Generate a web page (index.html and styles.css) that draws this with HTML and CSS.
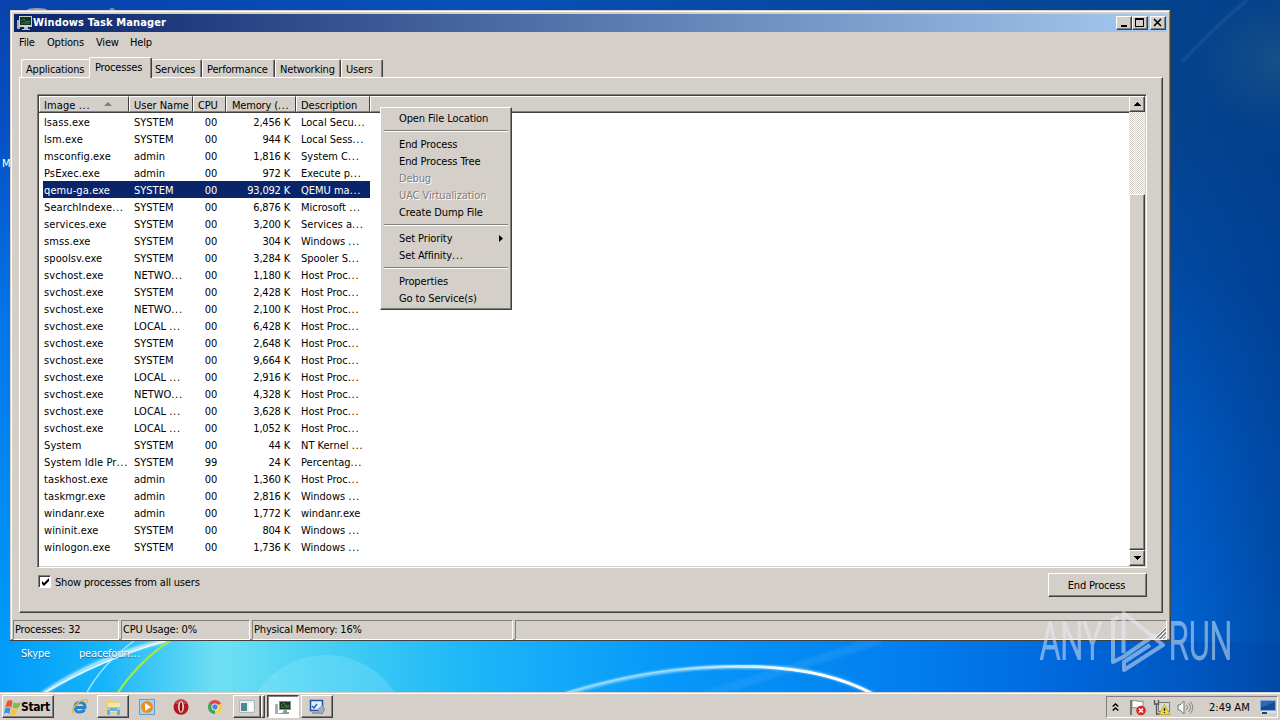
FILE: index.html
```html
<!DOCTYPE html>
<html lang="en">
<head>
<meta charset="utf-8">
<title>Windows Task Manager</title>
<link rel="stylesheet" href="styles.css">
</head>
<body>
<div class="desktop">
  <svg class="wallpaper" width="1280" height="720" viewBox="0 0 1280 720">
    <defs>
      <linearGradient id="low" x1="0" x2="1" y1="0" y2="0">
        <stop offset="0" stop-color="#009bfb"/><stop offset=".08" stop-color="#16b4fa"/><stop offset=".17" stop-color="#6fe0f2"/>
        <stop offset=".24" stop-color="#4bd2f3"/><stop offset=".36" stop-color="#1fb8f8"/><stop offset=".52" stop-color="#0798fa"/>
        <stop offset=".7" stop-color="#0280ef"/><stop offset=".83" stop-color="#0068dc"/><stop offset=".93" stop-color="#0057c2"/><stop offset="1" stop-color="#0049a6"/>
      </linearGradient>
      <linearGradient id="left" x1="0" x2="0" y1="0" y2="1">
        <stop offset="0" stop-color="#0843ad"/><stop offset=".2" stop-color="#0650c4"/><stop offset=".5" stop-color="#0276e8"/><stop offset="1" stop-color="#009bfb"/>
      </linearGradient>
      <linearGradient id="top" x1="0" x2="1" y1="0" y2="0">
        <stop offset="0" stop-color="#0842ad"/><stop offset=".35" stop-color="#0750b8"/><stop offset=".7" stop-color="#06489f"/><stop offset=".91" stop-color="#04448f"/><stop offset="1" stop-color="#0b4684"/>
      </linearGradient>
      <linearGradient id="right" gradientUnits="userSpaceOnUse" x1="1168" x2="1300" y1="600" y2="150">
        <stop offset="0" stop-color="#0064d4"/><stop offset=".35" stop-color="#0059c2"/><stop offset=".7" stop-color="#0049a2"/><stop offset="1" stop-color="#04438c"/>
      </linearGradient>
      <linearGradient id="shade" x1="0" x2="1" y1="0" y2="0">
        <stop offset="0" stop-color="#003c8c" stop-opacity="0"/><stop offset="1" stop-color="#003c8c" stop-opacity=".6"/>
      </linearGradient>
      <linearGradient id="arc" x1="0" x2="1" y1="0" y2="0"><stop offset="0" stop-color="#fff" stop-opacity="0"/><stop offset=".6" stop-color="#fff"/></linearGradient>
      <radialGradient id="haze"><stop offset="0" stop-color="#174f88"/><stop offset="1" stop-color="#174f88" stop-opacity="0"/></radialGradient>
      <filter id="soft"><feGaussianBlur stdDeviation="1.1"/></filter>
    </defs>
    <rect width="1280" height="720" fill="url(#low)"/>
    <rect width="14" height="642" fill="url(#left)"/>
    <rect width="1280" height="14" fill="url(#top)"/>
    <rect x="1168" width="112" height="642" fill="url(#right)"/>
    <rect x="1168" width="112" height="642" fill="url(#shade)"/>
    <ellipse cx="1280" cy="60" rx="85" ry="75" fill="url(#haze)"/>
    <path d="M1182 62Q1215 26 1252-4" stroke="#477bb5" stroke-opacity=".4" stroke-width="2" fill="none" filter="url(#soft)"/>
    <circle cx="326" cy="737" r="82" fill="#b8f4ff" opacity=".2"/>
    <g fill="none">
      <path d="M690 700Q790 668 880 640" stroke="#4ab4ff" stroke-opacity=".2" stroke-width="9" filter="url(#soft)"/>
      <path d="M42 694Q100 655 168 640" stroke="#fff" stroke-opacity=".65" stroke-width="4" filter="url(#soft)"/>
      <path d="M44 693Q100 660 165 641" stroke="#e5fbff" stroke-width="1.500"/>
      <path d="M86 694Q102 664 134 641" stroke="#c4f4ff" stroke-opacity=".8" stroke-width="1.500"/>
      <path d="M117 694Q139 661 171 640" stroke="#9ee850" stroke-width="2.200"/>
      <path d="M565 694Q660 665 745 667Q820 665 875 695" stroke="#8cd7ff" stroke-width="3.500" filter="url(#soft)"/>
      <path d="M565 693Q665 663 745 667" stroke="#b7ecff" stroke-opacity=".7" stroke-width="1"/>
      <path d="M670 671Q800 655 873 694" stroke="url(#arc)" stroke-width="2.800"/>
    </g>
    <ellipse cx="37" cy="10" rx="10" ry="2" fill="#9aa0a8"/><circle cx="112" cy="11" r="3" fill="#8b8b7e"/>
  </svg>
  <span class="shortcut shortcut-m">M</span>
  <span class="shortcut shortcut-skype">Skype</span>
  <span class="shortcut shortcut-peace">peacefoun<b>...</b></span>

  <main class="window">
    <header class="titlebar">
      <svg class="app-icon" width="16" height="16" viewBox="0 0 16 16"><path d="M1 5h3v9H1z" fill="#a8afb0"/><path d="M3 1h13v11H3z" fill="#c9cfc9"/><path d="M4 2h11v8H4z" fill="#163423"/><path d="M5 6l3-2 2 3 4-1M5 8h9" stroke="#2f7d3a" fill="none"/><path d="M8 12h4v2h2v1H6v-1h2z" fill="#b8c0c2"/></svg>
      <h1>Windows Task Manager</h1>
      <div class="caption">
        <button class="raised cap"><svg width="12" height="10"><path d="M3 7h6v2H3z"/></svg></button>
        <button class="raised cap"><svg width="12" height="10"><path d="M1 0h9v9H1zM2 2v6h7V2z" fill-rule="evenodd"/></svg></button>
        <button class="raised cap cap-close"><svg width="12" height="10"><path d="M2 1l7 7M9 1L2 8" stroke="#000" stroke-width="1.600"/></svg></button>
      </div>
    </header>
    <nav class="menubar"><span>File</span><span>Options</span><span>View</span><span>Help</span></nav>
    <div class="tabs">
      <span class="tab t-app">Applications</span><span class="tab t-proc active">Processes</span><span class="tab t-serv">Services</span><span class="tab t-perf">Performance</span><span class="tab t-net">Networking</span><span class="tab t-users">Users</span>
    </div>
    <section class="page">
      <div class="list">
        <div class="table">
          <div class="row head"><span>Image <b>...</b><i class="sort"></i></span><span>User Name</span><span>CPU</span><span>Memory (<b>...</b></span><span>Description</span><span></span></div>
          <div class="row"><span>lsass.exe</span><span>SYSTEM</span><span>00</span><span>2,456 K</span><span>Local Secu<b>...</b></span></div>
          <div class="row"><span>lsm.exe</span><span>SYSTEM</span><span>00</span><span>944 K</span><span>Local Sess<b>...</b></span></div>
          <div class="row"><span>msconfig.exe</span><span>admin</span><span>00</span><span>1,816 K</span><span>System C<b>...</b></span></div>
          <div class="row"><span>PsExec.exe</span><span>admin</span><span>00</span><span>972 K</span><span>Execute p<b>...</b></span></div>
          <div class="row selected"><span>qemu-ga.exe</span><span>SYSTEM</span><span>00</span><span>93,092 K</span><span>QEMU ma<b>...</b></span></div>
          <div class="row"><span>SearchIndexe<b>...</b></span><span>SYSTEM</span><span>00</span><span>6,876 K</span><span>Microsoft <b>...</b></span></div>
          <div class="row"><span>services.exe</span><span>SYSTEM</span><span>00</span><span>3,200 K</span><span>Services a<b>...</b></span></div>
          <div class="row"><span>smss.exe</span><span>SYSTEM</span><span>00</span><span>304 K</span><span>Windows <b>...</b></span></div>
          <div class="row"><span>spoolsv.exe</span><span>SYSTEM</span><span>00</span><span>3,284 K</span><span>Spooler S<b>...</b></span></div>
          <div class="row"><span>svchost.exe</span><span>NETWO<b>...</b></span><span>00</span><span>1,180 K</span><span>Host Proc<b>...</b></span></div>
          <div class="row"><span>svchost.exe</span><span>SYSTEM</span><span>00</span><span>2,428 K</span><span>Host Proc<b>...</b></span></div>
          <div class="row"><span>svchost.exe</span><span>NETWO<b>...</b></span><span>00</span><span>2,100 K</span><span>Host Proc<b>...</b></span></div>
          <div class="row"><span>svchost.exe</span><span>LOCAL <b>...</b></span><span>00</span><span>6,428 K</span><span>Host Proc<b>...</b></span></div>
          <div class="row"><span>svchost.exe</span><span>SYSTEM</span><span>00</span><span>2,648 K</span><span>Host Proc<b>...</b></span></div>
          <div class="row"><span>svchost.exe</span><span>SYSTEM</span><span>00</span><span>9,664 K</span><span>Host Proc<b>...</b></span></div>
          <div class="row"><span>svchost.exe</span><span>LOCAL <b>...</b></span><span>00</span><span>2,916 K</span><span>Host Proc<b>...</b></span></div>
          <div class="row"><span>svchost.exe</span><span>NETWO<b>...</b></span><span>00</span><span>4,328 K</span><span>Host Proc<b>...</b></span></div>
          <div class="row"><span>svchost.exe</span><span>LOCAL <b>...</b></span><span>00</span><span>3,628 K</span><span>Host Proc<b>...</b></span></div>
          <div class="row"><span>svchost.exe</span><span>LOCAL <b>...</b></span><span>00</span><span>1,052 K</span><span>Host Proc<b>...</b></span></div>
          <div class="row"><span>System</span><span>SYSTEM</span><span>00</span><span>44 K</span><span>NT Kernel <b>...</b></span></div>
          <div class="row"><span>System Idle Pr<b>...</b></span><span>SYSTEM</span><span>99</span><span>24 K</span><span>Percentag<b>...</b></span></div>
          <div class="row"><span>taskhost.exe</span><span>admin</span><span>00</span><span>1,360 K</span><span>Host Proc<b>...</b></span></div>
          <div class="row"><span>taskmgr.exe</span><span>admin</span><span>00</span><span>2,816 K</span><span>Windows <b>...</b></span></div>
          <div class="row"><span>windanr.exe</span><span>admin</span><span>00</span><span>1,772 K</span><span>windanr.exe</span></div>
          <div class="row"><span>wininit.exe</span><span>SYSTEM</span><span>00</span><span>804 K</span><span>Windows <b>...</b></span></div>
          <div class="row"><span>winlogon.exe</span><span>SYSTEM</span><span>00</span><span>1,736 K</span><span>Windows <b>...</b></span></div>
        </div>
        <div class="scrollbar">
          <div class="raised arrow"><svg width="7" height="4"><path d="M3 0h1v1h1v1h1v1h1v1H0V3h1V2h1V1h1z"/></svg></div>
          <div class="track"></div>
          <div class="raised thumb"></div>
          <div class="raised arrow"><svg width="7" height="4"><path d="M0 0h7v1H6v1H5v1H4v1H3V3H2V2H1V1H0z"/></svg></div>
        </div>
      </div>
      <div class="actions">
        <label class="check"><i class="box"><svg width="9" height="9"><path d="M1 3l2 2 5-5v3L3 8 1 6z"/></svg></i>Show processes from all users</label>
        <button class="raised end">End Process</button>
      </div>
    </section>
    <footer class="status"><span>Processes: 32</span><span>CPU Usage: 0%</span><span>Physical Memory: 16%</span><span></span>
      <svg class="grip" width="13" height="13"><path d="M1 13L13 1M5 13l8-8M9 13l4-4" stroke="#fff"/><path d="M2 13L13 2M3 13L13 3M6 13l7-7M7 13l6-6M10 13l3-3" stroke="#808080"/></svg>
    </footer>
  </main>

  <div class="context raised">
    <span>Open File Location</span><hr>
    <span>End Process</span><span>End Process Tree</span><span class="off">Debug</span><span class="off">UAC Virtualization</span><span>Create Dump File</span><hr>
    <span class="sub">Set Priority<svg width="4" height="7"><path d="M0 0l4 3.500-4 3.500z"/></svg></span><span>Set Affinity<b>...</b></span><hr>
    <span>Properties</span><span>Go to Service(s)</span>
  </div>

  <footer class="taskbar">
    <button class="raised start"><svg width="17" height="17" viewBox="0 0 16 16"><path d="M3 2q3-2 5 0L7 8Q4 6 1 8z" fill="#e8582c"/><path d="M9 3q3 2 7 0l-2 5q-3 2-6 0z" fill="#84bd43"/><path d="M1 9q3-2 5 0l-1 5q-3-2-5 0z" fill="#3c8de0"/><path d="M7 9q3 2 6 0l-2 5q-2 2-5 0z" fill="#f9c531"/></svg>Start</button>
    <span class="quick ie"><svg width="18" height="18" viewBox="0 0 18 18"><path d="M4 9.500h10Q14 4.500 9 4.500T4 9.500t5 4.500q3 0 4.500-2.500" fill="none" stroke="#2684cf" stroke-width="2.800"/><path d="M2 15C-1 12 8 2 14 1.500q4-.3 1.500 4" fill="none" stroke="#e9b73d" stroke-width="1.400"/></svg></span>
    <span class="raised task"><svg width="18" height="18" viewBox="0 0 18 18"><path d="M2 4l2-2h4l1 2h6v12H2z" fill="#ecd078"/><path d="M4 5h12v9H4z" fill="#f8e7a4"/><path d="M3 9h13v3H3z" fill="#99cdec"/><path d="M3 17v-5h3v-2h7v2h3v5h-3v-4H6v4z" fill="#66b2dc"/></svg></span>
    <span class="quick media"><svg width="18" height="18" viewBox="0 0 18 18"><path d="M1.500 1.500h15v15h-15z" fill="#a7d4f2" stroke="#5c9fce"/><circle cx="9" cy="9" r="6" fill="#f08a1e"/><path d="M7 5l6 4-6 4z" fill="#fff"/></svg></span>
    <span class="quick opera"><svg width="18" height="18" viewBox="0 0 18 18"><ellipse cx="9" cy="9" rx="7.500" ry="7.800" fill="#b71620"/><path d="M3 6q1-4 6-4.500 5 .5 6 4.500z" fill="#e16c6c" opacity=".5"/><ellipse cx="9" cy="9" rx="2.900" ry="5.800" fill="#f5eeee"/><ellipse cx="9" cy="9" rx="1.400" ry="4.800" fill="#8e1018"/></svg></span>
    <span class="quick chrome"><svg width="16" height="16" viewBox="0 0 16 16"><path d="M8 8L1.900 4.500A7 7 0 0 1 14.100 4.500z" fill="#dd4b3e"/><path d="M8 8l6.100-3.500A7 7 0 0 1 8 15z" fill="#f8cf40"/><path d="M8 8v7A7 7 0 0 1 1.900 4.500z" fill="#3ca55c"/><circle cx="8" cy="8" r="3.500" fill="#fff"/><circle cx="8" cy="8" r="2.700" fill="#4584ec"/></svg></span>
    <span class="raised task stack"><svg width="16" height="14" viewBox="0 0 16 14"><path d="M.5.500h15v12H.5z" fill="#e9edef" stroke="#aeb8bd"/><path d="M2 3h6v8H2z" fill="#53868d"/><path d="M10 3h4v8h-4z" fill="#fff"/></svg></span><i class="raised sliver"></i>
    <span class="task pressed"><svg width="18" height="16" viewBox="0 0 18 16"><path d="M1 5h3v10H1z" fill="#a5b2a6"/><path d="M5 2h12v9H5z" fill="#80948a"/><path d="M6 3h10v7H6z" fill="#173724"/><path d="M7 6l3-2 2 3 3-1M7 8h8" stroke="#3d8b48" fill="none"/><path d="M4 14h4l2-3h3v2h2v2H5z" fill="#8d9d96"/></svg></span>
    <span class="raised task last"><svg width="18" height="18" viewBox="0 0 18 18"><path d="M2.500 2.500h12v10h-12z" fill="#e4effc" stroke="#234f9c" stroke-width="1.500"/><path d="M4 8l2 2 3-4" stroke="#2b63be" stroke-width="1.500" fill="none"/><path d="M4 15h6" stroke="#8d9fb0" stroke-width="2"/><path d="M10 11l5-4v3l2 1-3 5-4-1z" fill="#9fb0bd" stroke="#66798a" stroke-width=".6"/></svg></span>
    <div class="tray">
      <svg class="chev" width="7" height="9" viewBox="0 0 7 9"><path d="M.7 3.500L3.500 1l2.800 2.500M.7 7.500L3.500 5l2.800 2.500" fill="none" stroke="#000" stroke-width="1.500"/></svg>
      <svg class="flag" width="18" height="17" viewBox="0 0 18 17"><path d="M2 1v15" stroke="#777" stroke-width="2"/><path d="M3 2q3-1 5 0t6 0v7q-3 1-6 0t-5 0z" fill="#fff" stroke="#888"/><circle cx="12" cy="11.500" r="4.800" fill="#d52a2a"/><path d="M10 9.500l4 4m0-4l-4 4" stroke="#fff" stroke-width="1.500"/></svg>
      <svg class="net" width="18" height="17" viewBox="0 0 18 17"><path d="M5.500 3.500h11v9h-11z" fill="#d5dde0" stroke="#777"/><path d="M1.500 1v4h4V1M3.500 5v10h4" fill="none" stroke="#555" stroke-width="1.300"/><path d="M11.500 5.500l5.500 10H6z" fill="#f7dd29" stroke="#aa9616" stroke-width=".7"/><path d="M11.500 9v3m0 1v1" stroke="#222" stroke-width="1.400"/></svg>
      <svg class="sound" width="17" height="17" viewBox="0 0 17 17"><path d="M1 6h2l4-4v13l-4-4H1z" fill="#f7f7f7" stroke="#777"/><path d="M9.500 6q2 2.500 0 5M11.500 4q4 4.500 0 9M13.500 2.500q4.500 6 0 12" fill="none" stroke="#858585"/></svg>
      <span class="clock">2:49 AM</span>
      <svg class="show" width="16" height="14" viewBox="0 0 16 14"><path d="M.5.500h15v10H.5z" fill="#2668c2" stroke="#87a9d0"/><path d="M1 7q7-1 14-6v9H1z" fill="#174a94"/><path d="M1 11h14v2H1z" fill="#d8e4ef"/><path d="M2 12h5v2H2z" fill="#263f62"/></svg>
    </div>
  </footer>

  <svg class="watermark" width="240" height="80" viewBox="0 0 240 80">
    <text x="2" y="50" textLength="62" lengthAdjust="spacingAndGlyphs">ANY</text>
    <text x="131" y="50" textLength="63" lengthAdjust="spacingAndGlyphs">RUN</text>
    <g fill="none" stroke-width="4" stroke-linejoin="round"><path d="M85.500 44V4L125 36 86 61v-8l26-17"/><path d="M81 8l-6 3v42l10-5 33-23"/></g>
  </svg>
</div>
</body>
</html>
```

FILE: styles.css
```css
* { box-sizing: border-box; }
body { margin: 0; overflow: hidden; }
.desktop {
  position: relative; width: 1280px; height: 720px; overflow: hidden;
  font: 11px/17px "DejaVu Sans Condensed", "DejaVu Sans", sans-serif; letter-spacing: -.18px; color: #000;
  white-space: nowrap;
}
svg { display: block; flex: none; }
button { font: inherit; letter-spacing: inherit; color: inherit; margin: 0; padding: 0; }
i { font-style: normal; }
b { font-weight: inherit; letter-spacing: .7px; }
.wallpaper { position: absolute; inset: 0; }
.shortcut { position: absolute; color: #fff; text-shadow: 0 1px 1px #0469a8; }
.shortcut-m { left: 2px; top: 155px; }
.shortcut-skype { left: 21px; top: 645px; }
.shortcut-peace { left: 79px; top: 645px; }
.raised {
  background: #d4cfc8; border: 1px solid; border-color: #fff #404040 #404040 #fff;
  box-shadow: inset -1px -1px #808080;
}

.window {
  position: absolute; left: 10px; top: 10px; width: 1161px; height: 631px; padding: 4px 4px 2px 3px;
  display: flex; flex-direction: column; background: #d4cfc8;
  box-shadow: inset -1px -1px #404040, inset 1px 1px #d4cfc8, inset -2px -2px #808080, inset 2px 2px #fff;
}
.titlebar { height: 18px; margin-left: 1px; padding: 0 1px 0 2px; display: flex; align-items: center; background: linear-gradient(90deg, #0a246a, #a6caf0); }
.titlebar h1 { margin: 0 auto 0 1px; font: bold 11px/18px "DejaVu Sans Condensed", sans-serif; letter-spacing: .12px; color: #fff; }
.caption { display: flex; }
.cap { width: 16px; height: 14px; padding: 1px; }
.cap-close { margin-left: 2px; }
.menubar { height: 25px; padding: 2px 6px; display: grid; grid-template-columns: 28px 49px 34px 40px; line-height: 17px; }
.tabs { height: 20px; padding-left: 8px; display: flex; align-items: flex-end; }
.tab { height: 18px; padding-left: 4px; line-height: 19px; border: solid; border-width: 1px 1px 0; border-color: #fff #404040 #fff #fff; box-shadow: inset -1px 0 #808080; border-radius: 2px 2px 0 0; }
.tab.active { position: relative; height: 21px; margin-bottom: -1px; line-height: 20px; background: #d4cfc8; padding-left: 5px; }
.t-app { width: 68px; border-right: 0; box-shadow: none; }
.t-proc { width: 63px; }
.t-serv { width: 50px; padding-left: 3px; border-left: 0; }
.t-perf { width: 73px; }
.t-net { width: 66px; }
.t-users { width: 42px; }
.page { height: 536px; margin: 0 4px 0 6px; padding: 16px 15px 0 17px; border: 1px solid; border-color: #fff #404040 #404040 #fff; box-shadow: inset -1px -1px #808080; }
.list { height: 474px; display: flex; background: #fff; border: 1px solid; border-color: #808080 #fff #fff #808080; padding: 1px; box-shadow: inset 1px 1px #404040, inset -1px -1px #d4cfc8; }
.table { flex: 1; }
.row { display: grid; grid-template-columns: 90px 58px 38px 71px 74px; width: 331px; height: 17px; line-height: 19px; }
.row span { padding-left: 5px; }
.row span:nth-child(1) { letter-spacing: .1px; }
.row span:nth-child(2) { letter-spacing: 0; }
.row span:nth-child(3) { text-align: right; padding: 0 8px 0 0; }
.row span:nth-child(4) { text-align: right; padding-right: 6px; }
.row span:nth-child(5) { letter-spacing: 0; }
.selected { color: #fff; background: linear-gradient(90deg, transparent 4px, #0a246a 4px); }
.head { width: 100%; grid-template-columns: 90px 64px 33px 70px 74px 1fr; background: #d4cfc8; border-bottom: 1px solid #404040; }
.head span, .head span:nth-child(3), .head span:nth-child(4) { height: 16px; line-height: 17px; padding: 0 0 0 4px; text-align: left; border: 1px solid; border-color: #fff #404040 #808080 #fff; }
.head span:nth-child(4) { padding-left: 5px; }
.head span:last-child { border-right: 0; }
.sort { display: inline-block; margin: 0 0 3px 14px; border: solid transparent; border-width: 0 4px 4px; border-bottom-color: #808080; }
.scrollbar { width: 16px; height: 470px; display: flex; flex-direction: column; }
.arrow { height: 16px; display: grid; place-items: center; }
.track { height: 82px; background: repeating-conic-gradient(#d4cfc8 0 25%, #fff 0 50%) 0 0 / 2px 2px; }
.thumb { flex: 1; }
.actions { display: flex; justify-content: space-between; padding-top: 5px; }
.check { display: flex; gap: 4px; height: 17px; margin: 1px 0 0 1px; }
.box { width: 13px; height: 13px; margin-top: 1px; padding: 2px; background: #fff; border: 1px solid; border-color: #808080 #fff #fff #808080; box-shadow: inset 1px 1px #404040; }
.end { width: 99px; height: 24px; padding-right: 2px; }
.status { position: relative; height: 19px; margin-top: 7px; display: grid; grid-template-columns: 106px 129px 261px 1fr; gap: 2px; line-height: 18px; }
.status span { padding-left: 1px; border: 1px solid; border-color: #808080 #fff #fff #808080; }
.grip { position: absolute; right: 1px; bottom: 0; }

.context { position: absolute; left: 380px; top: 107px; width: 132px; height: 203px; padding: 2px; display: flex; flex-direction: column; }
.context span { height: 17px; padding-left: 16px; letter-spacing: -.1px; }
.context hr { width: 124px; height: 2px; margin: 3px 1px 4px; border: 0; background: linear-gradient(#808080 50%, #fff 50%); }
.context .off { color: #808080; text-shadow: 1px 1px #fff; }
.context .sub { display: flex; justify-content: space-between; align-items: center; padding-right: 6px; }

.taskbar { position: absolute; left: 0; right: 0; bottom: 0; height: 28px; padding: 3px 2px 2px; display: flex; background: #d4cfc8; box-shadow: inset 0 1px #d4cfc8, inset 0 2px #fff; }
.start { width: 52px; height: 23px; display: flex; align-items: center; padding: 1px 0 0 1px; font-weight: bold; font-size: 12px; letter-spacing: -.4px; }
.quick { display: grid; place-items: center; width: 18px; height: 23px; }
.ie { margin: 0 8px 0 17px; }
.task { width: 32px; height: 23px; display: grid; place-items: center; }
.media { margin-left: 9px; }
.opera { margin-left: 16px; }
.chrome { margin-left: 16px; }
.stack { margin-left: 9px; width: 28px; }
.sliver { width: 4px; height: 23px; }
.pressed { margin-left: 2px; background: #fff; border: 1px solid; border-color: #404040 #fff #fff #404040; box-shadow: inset 1px 1px #808080; }
.last { margin-left: 2px; }
.tray { margin-left: auto; width: 172px; height: 22px; margin-top: 1px; display: flex; align-items: center; padding: 0 1px 0 5px; border: 1px solid; border-color: #808080 #fff #fff #808080; }
.flag { margin-left: 10px; }
.net { margin-left: 6px; }
.sound { margin-left: 6px; }
.clock { margin: 0 auto 0 15px; letter-spacing: 0; }
.watermark { position: absolute; left: 1038px; top: 609px; opacity: .5; }
.watermark text { font: 300 51px Roboto, sans-serif; letter-spacing: 0; fill: #e8f0f8; stroke: #e8f0f8; stroke-width: 1.8px; }
.watermark g { stroke: #e8f0f8; }
```
